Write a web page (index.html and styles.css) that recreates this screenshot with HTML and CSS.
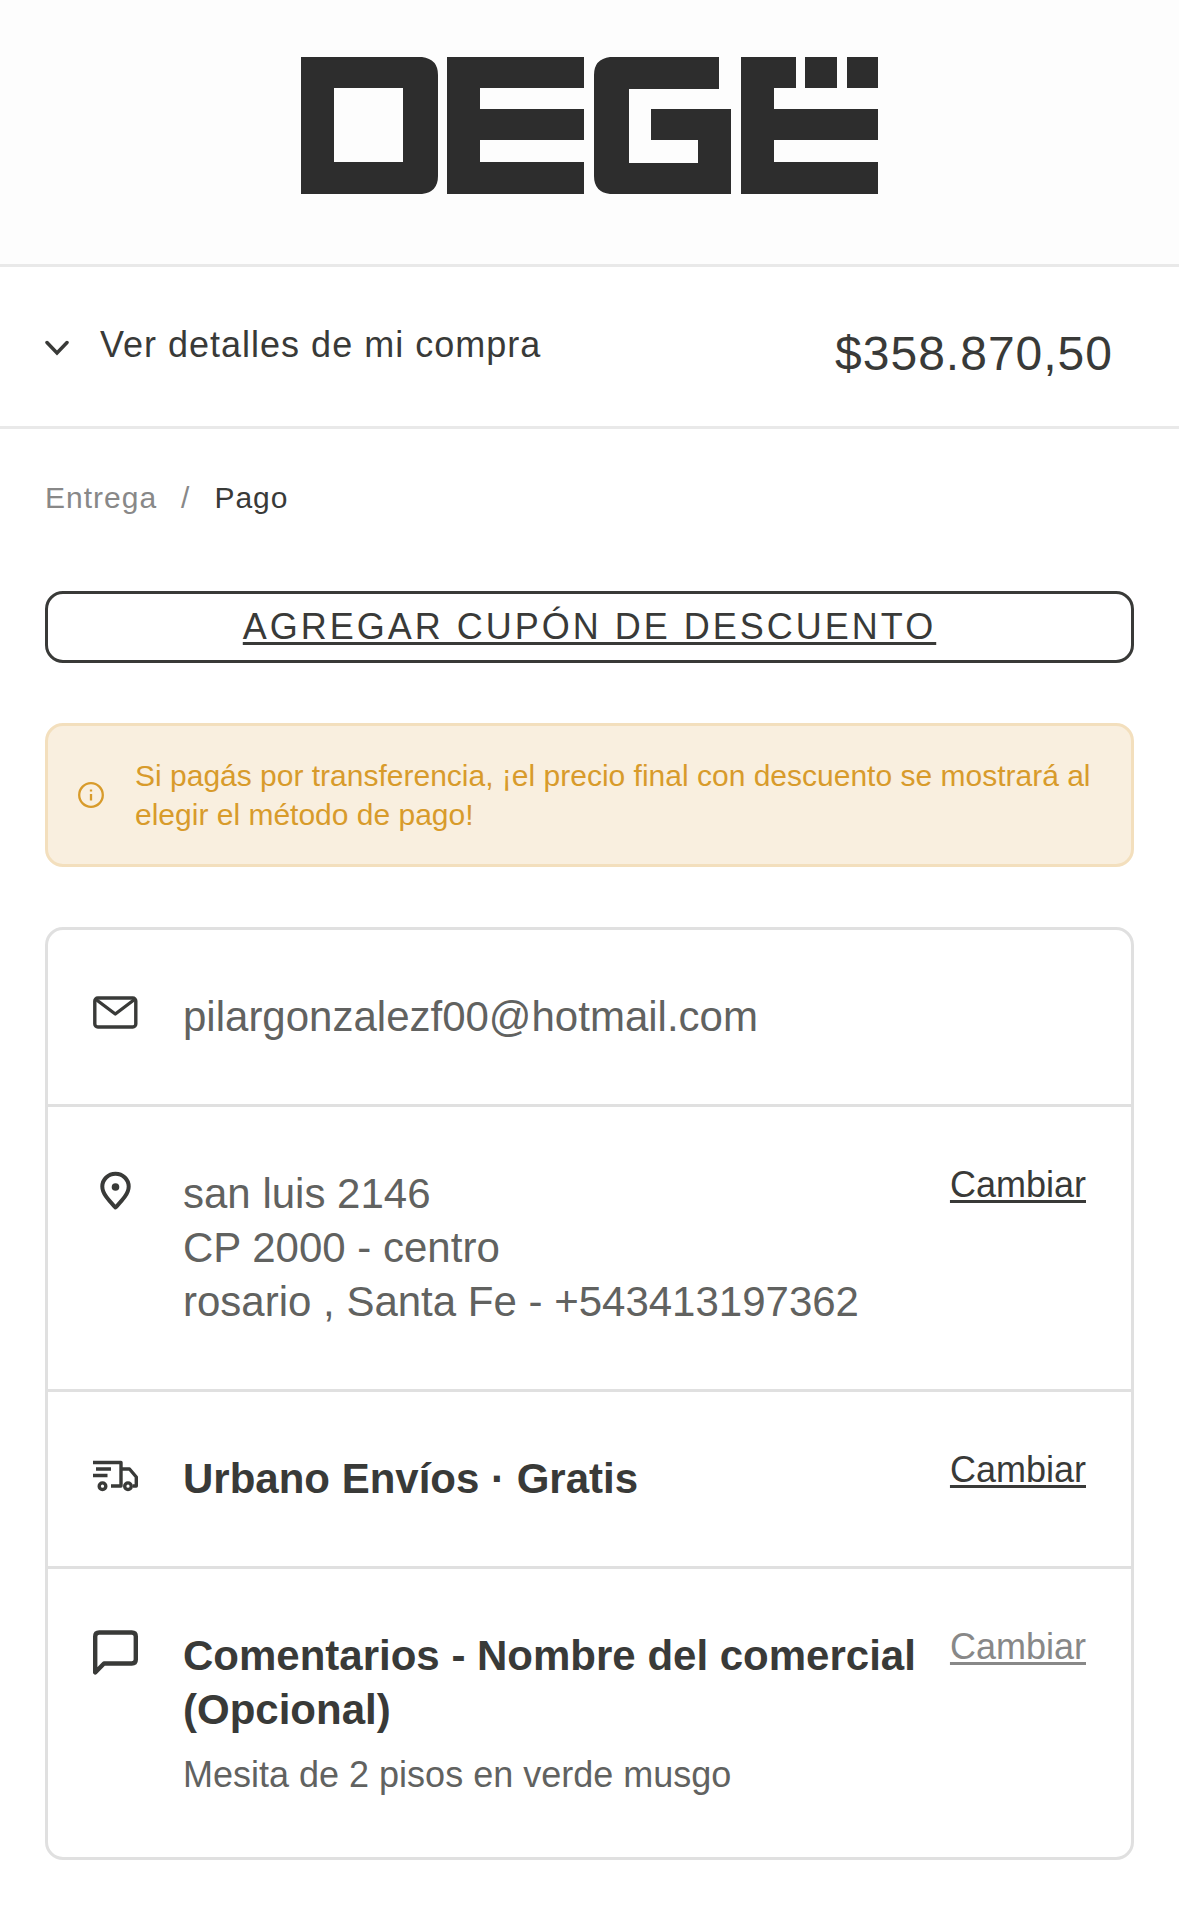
FILE: index.html
```html
<!DOCTYPE html>
<html lang="es">
<head>
  <meta charset="UTF-8">
  <meta name="viewport" content="width=device-width, initial-scale=1">
  <title>DEGË - Pago</title>
  <link rel="stylesheet" href="styles.css">
</head>
<body>

  <header class="header">
    <svg class="logo" viewBox="0 0 577 137" role="img" aria-label="DEGË">
      <path fill-rule="evenodd" d="M0 0H121Q137 2 137 18V119Q137 135 121 137H0ZM33 31V105H102V31Z"/>
      <path d="M146 0H283V31H179V52H283V83H179V105H283V137H146Z"/>
      <path d="M309 0H418V32H328V106H397V83H350V52H430V137H309Q293 135 293 119V18Q293 2 309 0Z"/>
      <path d="M440 0H495V31H473V52H577V83H473V105H577V137H440Z"/>
      <path d="M504 0H536V31H504ZM546 0H577V31H546Z"/>
    </svg>
  </header>

  <section class="summary">
    <button type="button" class="summary-toggle">
      <svg class="chevron" viewBox="0 0 24 24" aria-hidden="true">
        <path d="M2 9.500L12 20L22 9.500"/>
      </svg>
      Ver detalles de mi compra
    </button>
    <span class="summary-total">$358.870,50</span>
  </section>

  <main class="container">
    <nav class="breadcrumb">
      <a href="#">Entrega</a>
      <span>/</span>
      <span class="active">Pago</span>
    </nav>

    <button type="button" class="coupon">AGREGAR CUPÓN DE DESCUENTO</button>

    <div class="alert">
      <svg class="alert-icon" viewBox="0 0 26 26" aria-hidden="true">
        <circle cx="13" cy="13" r="11.8"/>
        <path d="M13 12V18.500M13 7.500V9.500"/>
      </svg>
      <p>Si pagás por transferencia, ¡el precio final con descuento se mostrará al elegir el método de pago!</p>
    </div>

    <div class="card">
      <div class="row">
        <svg class="icon mail" viewBox="0 0 45 45" aria-hidden="true">
          <rect x="1.800" y="8" width="41" height="29" rx="3"/>
          <path d="M3 9.500L22.300 24L41.500 9.500"/>
        </svg>
        <div class="info">pilargonzalezf00@hotmail.com</div>
      </div>

      <div class="row">
        <svg class="icon" viewBox="0 0 45 45" aria-hidden="true">
          <path d="M22.500 40.500C16.500 34 9.300 27 9.300 19.500A13.200 12.800 0 0 1 35.700 19.500C35.700 27 28.500 34 22.500 40.500Z"/>
          <circle class="dot" cx="22.500" cy="20" r="3.800"/>
        </svg>
        <div class="info">
          san luis 2146<br>
          CP 2000 - centro<br>
          rosario , Santa Fe - +543413197362
        </div>
        <a href="#" class="change">Cambiar</a>
      </div>

      <div class="row">
        <svg class="icon truck" viewBox="0 0 45 45" aria-hidden="true">
          <path d="M0 10.500H28V34H18M3 17H18M0 23.500H14.500M28 17H36.500L43.300 25V34H40"/>
          <circle cx="9.500" cy="34.200" r="3.300"/>
          <circle cx="35" cy="34.200" r="3.300"/>
        </svg>
        <div class="info"><strong>Urbano Envíos · Gratis</strong></div>
        <a href="#" class="change">Cambiar</a>
      </div>

      <div class="row">
        <svg class="icon comment" viewBox="0 0 45 45" aria-hidden="true">
          <path d="M2.200 43.500V7.500Q2.200 3.500 6.200 3.500H38.800Q42.800 3.500 42.800 7.500V30.500Q42.800 34.500 38.800 34.500H11Z"/>
        </svg>
        <div class="info">
          <strong>Comentarios - Nombre del comercial (Opcional)</strong>
          <p class="note">Mesita de 2 pisos en verde musgo</p>
        </div>
        <a href="#" class="change muted">Cambiar</a>
      </div>
    </div>
  </main>

</body>
</html>
```

FILE: styles.css
```css
* {
  box-sizing: border-box;
}

body {
  font-family: "Liberation Sans", Arial, Helvetica, sans-serif;
  background-color: #fff;
  color: #393a38;
  margin: 0;
}

p {
  margin: 0;
}

button {
  font-family: inherit;
  color: inherit;
  background: none;
  border: none;
  padding: 0;
  cursor: pointer;
}

.header {
  display: flex;
  justify-content: center;
  padding: 57px 45px 70px;
  background-color: #fdfdfd;
  border-bottom: 3px solid #e9e9e9;
}

.logo {
  width: 577px;
  max-width: 100%;
  fill: #2d2d2d;
}

/* Resumen de la compra */
.summary {
  display: flex;
  justify-content: space-between;
  align-items: flex-start;
  padding: 51px 66px 36px 45px;
  border-bottom: 3px solid #e9e9e9;
}

.summary-toggle {
  display: flex;
  align-items: center;
  gap: 31px;
  font-size: 36px;
  line-height: 54px;
  letter-spacing: 1px;
}

.chevron {
  width: 24px;
  height: 24px;
  fill: none;
  stroke: #393a38;
  stroke-width: 3.5;
  stroke-linecap: round;
}

.summary-total {
  font-size: 48px;
  line-height: 72px;
  letter-spacing: 1px;
}

.container {
  padding: 48px 45px 64px;
}

.breadcrumb {
  display: flex;
  gap: 24px;
  margin-bottom: 72px;
  font-size: 30px;
  line-height: 42px;
  letter-spacing: 1px;
  color: #888;
}

.breadcrumb a {
  color: inherit;
  text-decoration: none;
}

.breadcrumb .active {
  color: #393a38;
}

.coupon {
  display: block;
  width: 100%;
  margin-bottom: 60px;
  border: 3px solid #393a38;
  border-radius: 18px;
  font-size: 36px;
  line-height: 66px;
  letter-spacing: 3px;
  text-decoration: underline;
  text-decoration-thickness: 3px;
  text-underline-offset: 3px;
  text-decoration-skip-ink: none;
}

.alert {
  display: flex;
  align-items: center;
  gap: 31px;
  margin-bottom: 60px;
  padding: 30px;
  background-color: #f9efdf;
  border: 3px solid #f3dfbd;
  border-radius: 18px;
  font-size: 30px;
  line-height: 39px;
  color: #d89b2b;
}

.alert-icon {
  flex: none;
  width: 26px;
  height: 26px;
  fill: none;
  stroke: #d89b2b;
  stroke-width: 2.3;
}

/* Datos del pedido */
.card {
  border: 3px solid #e0e0e0;
  border-radius: 18px;
}

.row {
  display: flex;
  align-items: flex-start;
  padding: 60px 45px;
}

.row + .row {
  border-top: 3px solid #e0e0e0;
}

.icon {
  flex: none;
  width: 45px;
  height: 45px;
  margin-right: 45px;
  overflow: visible;
  fill: none;
  stroke: #393a38;
  stroke-width: 4;
  stroke-linejoin: round;
}

.icon .dot {
  fill: #393a38;
  stroke: none;
}

.mail,
.truck {
  stroke-width: 3.4;
}

.comment {
  stroke-width: 4.4;
}

.info {
  flex: 1;
  font-size: 42px;
  line-height: 54px;
  color: #616260;
}

.info strong {
  color: #393a38;
}

.note {
  margin-top: 15px;
  font-size: 36px;
  line-height: 45px;
}

.change {
  margin-left: 30px;
  font-size: 36px;
  line-height: 36px;
  color: #393a38;
  text-decoration-thickness: 3px;
  text-underline-offset: 3px;
}

.muted {
  color: #888;
}
```
